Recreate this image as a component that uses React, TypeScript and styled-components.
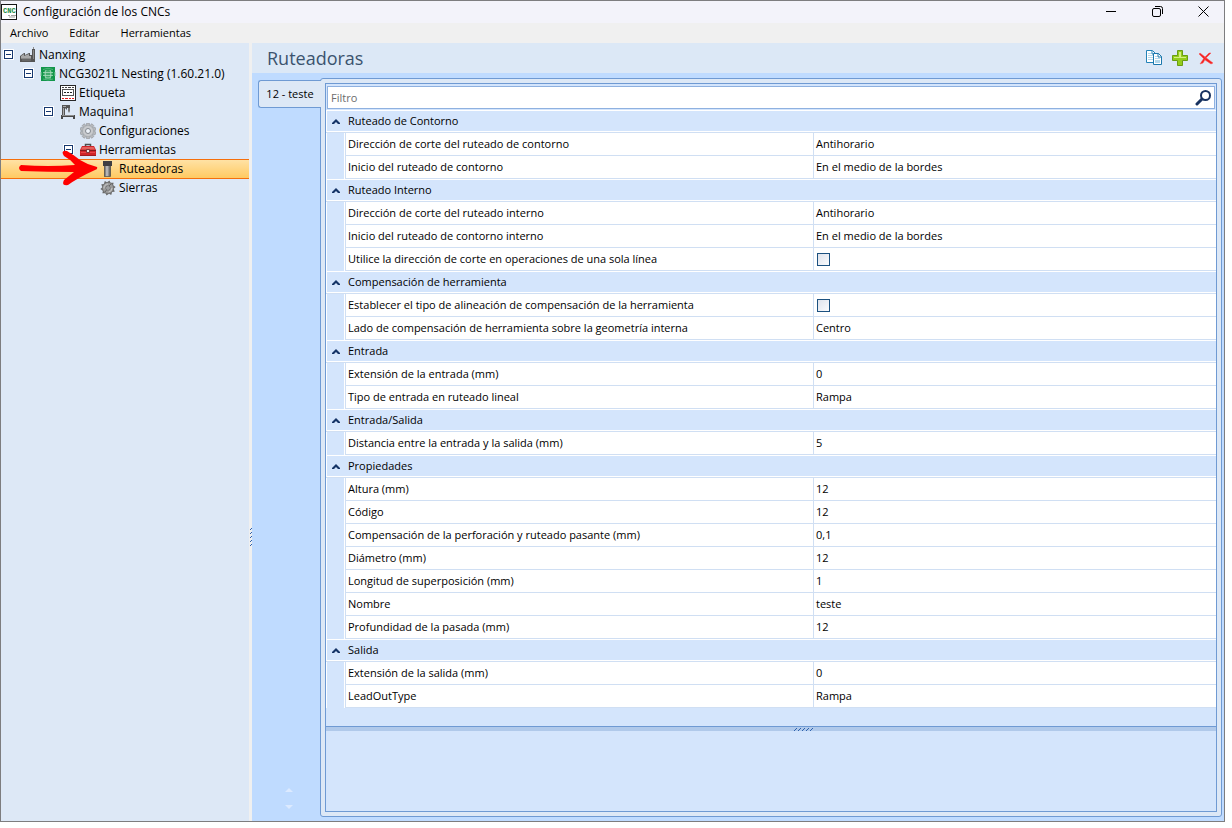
import React, { useState } from "react";
import styled, { createGlobalStyle, css } from "styled-components";

const GlobalStyle = createGlobalStyle`
  * { box-sizing: border-box; }
  body {
    margin: 0;
    background: #fff;
    color: #000;
    font-family: "Segoe UI", "Open Sans", "Noto Sans", sans-serif;
    font-size: 11px;
  }
  button { font: inherit; color: inherit; border: 0; background: none; padding: 0; }
  ul { list-style: none; margin: 0; padding: 0; }
  svg { display: block; flex: none; }
`;

const Window = styled.div`
  display: flex;
  flex-direction: column;
  min-height: calc(100vh - 6px);
  margin-right: 7px;
  border: 1px solid #7d7d7f;
  background: #f0f0f0;
`;

const TitleBar = styled.header`
  display: flex;
  align-items: center;
  height: 22px;
  background: #f3f3fa;
`;

const WindowTitle = styled.h1`
  flex: 1;
  margin: 0 0 0 6px;
  font-size: 12px;
  font-weight: 400;
  line-height: 22px;
`;

const WindowButtons = styled.div`
  display: flex;
  gap: 4px;
  align-self: flex-start;
`;

const WindowButton = styled.button`
  display: flex;
  align-items: center;
  justify-content: center;
  width: 42px;
  height: 20px;
`;

const MenuBar = styled.nav`
  display: flex;
  gap: 21px;
  height: 20px;
  padding-left: 9px;
  line-height: 20px;
`;

const Body = styled.div`
  display: flex;
  flex: 1;
`;

const TreePanel = styled.aside`
  width: 248px;
  flex: none;
  padding-top: 2px;
  background: #dde8f6;
`;

const TreeRow = styled.li<{ $depth: number; $selected?: boolean }>`
  position: relative;
  display: flex;
  align-items: center;
  gap: 3px;
  height: 19px;
  padding-left: ${(p) => p.$depth * 20 + 3}px;
  font-size: 12px;
  line-height: 19px;
  white-space: nowrap;
  ${(p) =>
    p.$selected &&
    css`
      background: linear-gradient(#ffe3a8, #ffca62);
      box-shadow: inset 0 1px #f56f0c, 0 1px #f56f0c;
    `}
`;

const ExpanderSlot = styled.span`
  display: flex;
  width: 13px;
  flex: none;
`;

const Expander = styled.button`
  display: flex;
  align-items: center;
  justify-content: center;
  width: 9px;
  height: 9px;
  border: 1px solid #16386f;
  background: #fff;
  outline: 1px solid #fff;

  &::before {
    content: "";
    width: 5px;
    height: 1px;
    background: #16386f;
  }
`;

const Pointer = styled.svg`
  position: absolute;
  left: 17px;
  top: -9px;
  z-index: 1;
  pointer-events: none;
`;

const Splitter = styled.div`
  display: flex;
  align-items: center;
  justify-content: flex-end;
  width: 3px;
  flex: none;
  padding-top: 210px;
`;

const Main = styled.main`
  display: flex;
  flex: 1;
  flex-direction: column;
  min-width: 0;
  background: #bfdbff;
`;

const MainHeader = styled.div`
  display: flex;
  align-items: center;
  height: 30px;
  padding: 0 9px 0 15px;
  background: #dce8f6;
`;

const Heading = styled.h2`
  flex: 1;
  margin: 0;
  color: #3b536e;
  font-size: 18px;
  font-weight: 400;
  line-height: 30px;
`;

const Toolbar = styled.div`
  display: flex;
  gap: 9px;
`;

const Workspace = styled.div`
  display: flex;
  flex: 1;
  padding: 5px 2px 4px 6px;
`;

const TabStrip = styled.div`
  display: flex;
  flex-direction: column;
  width: 63px;
  flex: none;
  margin-right: -1px;
  padding-top: 2px;
  z-index: 1;
`;

const Tab = styled.button`
  height: 28px;
  border: 1px solid #6f9ad3;
  border-right: 0;
  border-radius: 3px 0 0 3px;
  background: #dde8f6;
  line-height: 26px;
  white-space: nowrap;
`;

const TabScroll = styled.div`
  display: flex;
  flex-direction: column;
  gap: 13px;
  align-items: center;
  margin-top: auto;
  padding: 0 2px 8px 0;
`;

const TabPage = styled.section`
  display: flex;
  flex: 1;
  min-width: 0;
  padding: 4px;
  border: 1px solid #6f9ad3;
  border-radius: 3px;
  background: #dde8f6;
`;

const PropertyPanel = styled.div`
  display: flex;
  flex: 1;
  flex-direction: column;
  min-width: 0;
  border: 1px solid #6f9ad3;
  background: #d4e5fc;
`;

const Filter = styled.div`
  display: flex;
  align-items: center;
  height: 23px;
  margin: 2px 1px 1px;
  border: 1px solid #8fb1e0;
  background: #fff;
`;

const FilterInput = styled.input`
  flex: 1;
  min-width: 0;
  height: 20px;
  padding: 0 3px;
  border: 0;
  outline: 0;
  background: none;
  font: inherit;

  &::placeholder { color: #6d6d6d; opacity: 1; }
`;

const SearchButton = styled.button`
  padding-right: 2px;
`;

const Grid = styled.table`
  width: 100%;
  border-collapse: separate;
  border-spacing: 0;
  table-layout: fixed;
  margin-bottom: 18px;
`;

const GutterCol = styled.col`
  width: 19px;
`;

const NameCol = styled.col`
  width: 468px;
`;

const GroupRow = styled.tr`
  height: 23px;
`;

const GroupCell = styled.th`
  padding: 0;
  border-bottom: 1px solid #d0dff3;
  background: #d4e5fc;
  box-shadow: inset 0 1px #fff, inset 0 -1px #fff, inset 1px 0 #fff;
  font-weight: 400;
  text-align: left;
`;

const GroupToggle = styled.button`
  display: flex;
  align-items: center;
  gap: 8px;
  height: 22px;
  padding-left: 6px;
  line-height: 22px;
`;

const Row = styled.tr`
  height: 23px;
  background: #fff;
`;

const Gutter = styled.td`
  padding: 0;
  background: #d4e5fc;
  box-shadow: inset 1px 0 #fff, inset -1px 0 #fff;
`;

const Cell = styled.td`
  padding: 0 0 0 2px;
  border-left: 1px solid #d0dff3;
  border-bottom: 1px solid #d0dff3;
  line-height: 22px;
  white-space: nowrap;
`;

const Check = styled.input`
  appearance: none;
  display: block;
  width: 13px;
  height: 13px;
  margin: 0 0 0 1px;
  border: 1px solid #1c5180;
  background: linear-gradient(135deg, #dfe3ec, #fafbfd);
`;

const DescriptionSplitter = styled.div`
  display: flex;
  align-items: center;
  justify-content: center;
  height: 5px;
  padding-left: 64px;
  border-top: 1px solid #6f9ad3;
  background: #b0c9ea;
`;

const Description = styled.div`
  flex: 1;
  min-height: 40px;
`;

type IconName = "factory" | "machine" | "label" | "mill" | "gear" | "toolbox" | "bit" | "saw";

const icons: Record<IconName, React.ReactNode> = {
  factory: (
    <>
      <path d="M0 15V9l4-3h1v2l4-2h1v2h2V2h3v13z" fill="#555" />
      <path d="M1 9l3-2v2l5-2v2h2v2H1z" fill="#a8a8a8" />
      <path d="M1 11.500h10" stroke="#8a8a8a" />
      <path d="M13.500 3v9" stroke="#8c8c8c" />
      <path d="M2 13h9" stroke="#787878" />
      <path d="M13.500 0v2" stroke="#8d8d8d" />
    </>
  ),
  machine: (
    <>
      <rect x="1" y="1" width="14" height="14" fill="#12964a" />
      <path d="M1 6v4M15 6v4" stroke="#7cc79b" />
      <circle cx="8" cy="8" r="4.500" fill="#43ab6d" />
      <path d="M3 6.500h10M3 9.500h10M6 4c-1 2-1 6 0 8M10 4c1 2 1 6 0 8M5 12h6" fill="none" stroke="#a9dcbe" strokeWidth=".8" />
      <path d="M3 3.500q5-2.500 10 0M3 13q5 2 10 0" fill="none" stroke="#7cc79b" strokeWidth=".6" />
    </>
  ),
  label: (
    <>
      <rect x="0.500" y="0.500" width="15" height="15" fill="#fff" stroke="#272727" />
      <path d="M2 2.500h2M5 2.500h2M8 2.500h3M12 2.500h2" stroke="#444" />
      <rect x="2.500" y="4.500" width="11" height="6" fill="none" stroke="#555" />
      <path d="M4 7.500h2M7 7.500h2M10 7.500h2" stroke="#222" />
      <path d="M2 13.500h2M5 13.500h3M9 13.500h2M12 13.500h2" stroke="#e21b1b" />
    </>
  ),
  mill: (
    <>
      <path d="M2 1h8v3H7v2l-2-2v7H2z" fill="#555" />
      <path d="M3 2h3v1H3zM3 4h1v7H3z" fill="#aaa" />
      <path d="M8 4h2v3L9 9 8 7z" fill="#777" />
      <path d="M1 15v-4h14v4h-2v-2H3v2z" fill="#484848" />
      <path d="M2 11.500h12" stroke="#8d8d8d" />
    </>
  ),
  gear: (
    <>
      {Array.from({ length: 10 }, (_, i) => (
        <rect key={i} x="6.500" y="0" width="3" height="4" rx=".6" fill="#b7b9bc" stroke="#92969b" strokeWidth=".6" transform={`rotate(${i * 36} 8 8)`} />
      ))}
      <circle cx="8" cy="8" r="5.500" fill="#c8cacd" stroke="#a0a4a8" strokeWidth=".6" />
      <circle cx="8" cy="8" r="2.500" fill="#eef3f9" stroke="#83888e" />
    </>
  ),
  toolbox: (
    <>
      <path d="M5.500 5V2.500h5V5" fill="none" stroke="#4d4d4d" strokeWidth="1.500" />
      <path d="M2 4h12l2 4v6H0V8z" fill="#cf2428" />
      <path d="M2.500 5h11L15 7.500H1z" fill="#e4605d" />
      <path d="M0 8.500h16" stroke="#84191c" />
      <path d="M1 10.500h14" stroke="#e8474a" />
      <path d="M0 13.500h16" stroke="#a01a1e" />
      <path d="M6.500 7.500h3v3h-3z" fill="#e9e9e9" stroke="#6b2426" strokeWidth=".8" />
    </>
  ),
  bit: (
    <>
      <defs>
        <linearGradient id="shank">
          <stop offset="0" stopColor="#555" />
          <stop offset=".4" stopColor="#c8c8c8" />
          <stop offset="1" stopColor="#4c4c4c" />
        </linearGradient>
      </defs>
      <rect x="4.500" y="4" width="6" height="11.500" fill="url(#shank)" stroke="#4a4a4a" strokeWidth=".7" />
      <rect x="3" y="0" width="9" height="5" fill="#3f3f43" />
    </>
  ),
  saw: (
    <>
      {Array.from({ length: 10 }, (_, i) => (
        <path key={i} d="M6 3L9.500 0.500L11 4z" fill="#686868" transform={`rotate(${i * 36} 8 8)`} />
      ))}
      <circle cx="8" cy="8" r="5.500" fill="#9a9a9a" stroke="#707070" strokeWidth=".6" />
      <path d="M4 8.500a4 4 0 0 1 4-4.500M12 8a4 4 0 0 1-3.500 4" fill="none" stroke="#c9c9c9" />
      <path d="M11 4l-2 2M5 12l1.500-2" stroke="#666" />
      <circle cx="8" cy="8" r="2" fill="#f2f4f6" stroke="#555" strokeWidth=".8" />
      <circle cx="8" cy="8" r=".8" fill="#333" />
    </>
  ),
};

const TreeIcon = ({ name }: { name: IconName }) => (
  <svg width="16" height="16" viewBox="0 0 16 16" aria-hidden="true">
    {icons[name]}
  </svg>
);

const tree: { label: string; icon: IconName; depth: number; parent?: boolean }[] = [
  { label: "Nanxing", icon: "factory", depth: 0, parent: true },
  { label: "NCG3021L Nesting (1.60.21.0)", icon: "machine", depth: 1, parent: true },
  { label: "Etiqueta", icon: "label", depth: 2 },
  { label: "Maquina1", icon: "mill", depth: 2, parent: true },
  { label: "Configuraciones", icon: "gear", depth: 3 },
  { label: "Herramientas", icon: "toolbox", depth: 3, parent: true },
  { label: "Ruteadoras", icon: "bit", depth: 4 },
  { label: "Sierras", icon: "saw", depth: 4 },
];

const groups: { title: string; rows: [string, string | boolean][] }[] = [
  {
    title: "Ruteado de Contorno",
    rows: [
      ["Dirección de corte del ruteado de contorno", "Antihorario"],
      ["Inicio del ruteado de contorno", "En el medio de la bordes"],
    ],
  },
  {
    title: "Ruteado Interno",
    rows: [
      ["Dirección de corte del ruteado interno", "Antihorario"],
      ["Inicio del ruteado de contorno interno", "En el medio de la bordes"],
      ["Utilice la dirección de corte en operaciones de una sola línea", false],
    ],
  },
  {
    title: "Compensación de herramienta",
    rows: [
      ["Establecer el tipo de alineación de compensación de la herramienta", false],
      ["Lado de compensación de herramienta sobre la geometría interna", "Centro"],
    ],
  },
  {
    title: "Entrada",
    rows: [
      ["Extensión de la entrada (mm)", "0"],
      ["Tipo de entrada en ruteado lineal", "Rampa"],
    ],
  },
  { title: "Entrada/Salida", rows: [["Distancia entre la entrada y la salida (mm)", "5"]] },
  {
    title: "Propiedades",
    rows: [
      ["Altura (mm)", "12"],
      ["Código", "12"],
      ["Compensación de la perforación y ruteado pasante (mm)", "0,1"],
      ["Diámetro (mm)", "12"],
      ["Longitud de superposición (mm)", "1"],
      ["Nombre", "teste"],
      ["Profundidad de la pasada (mm)", "12"],
    ],
  },
  {
    title: "Salida",
    rows: [
      ["Extensión de la salida (mm)", "0"],
      ["LeadOutType", "Rampa"],
    ],
  },
];

const LogoText = styled.text`
  font-family: "Liberation Mono", monospace;
  font-size: 7px;
  font-weight: 700;
  fill: #16883c;
`;

const AppIcon = () => (
  <svg width="16" height="16" viewBox="0 0 16 16" aria-hidden="true">
    <rect x="0.500" y="0.500" width="15" height="15" fill="#fff" stroke="#151515" />
    <LogoText x="2" y="9">CNC</LogoText>
    <path d="M7 11.500h2M10 11.500h5M8 13h6" stroke="#a0a0a0" />
  </svg>
);

const PropertyGroup = ({ title, rows }: { title: string; rows: [string, string | boolean][] }) => {
  const [open, setOpen] = useState(true);
  return (
    <tbody>
      <GroupRow>
        <GroupCell colSpan={3} scope="rowgroup">
          <GroupToggle type="button" aria-expanded={open} onClick={() => setOpen(!open)}>
            <svg width="8" height="5" viewBox="0 0 8 5" aria-hidden="true">
              <path d="M0 5V4l4-4 4 4v1H6L4 3 2 5z" fill="#153467" />
            </svg>
            {title}
          </GroupToggle>
        </GroupCell>
      </GroupRow>
      {open &&
        rows.map(([name, value]) => (
          <Row key={name}>
            <Gutter />
            <Cell>{typeof value === "boolean" ? <label htmlFor={name}>{name}</label> : name}</Cell>
            <Cell>{typeof value === "boolean" ? <Check type="checkbox" id={name} defaultChecked={value} /> : value}</Cell>
          </Row>
        ))}
    </tbody>
  );
};

export default function App() {
  return (
    <>
      <GlobalStyle />
      <Window>
        <TitleBar>
          <AppIcon />
          <WindowTitle>Configuración de los CNCs</WindowTitle>
          <WindowButtons>
            <WindowButton type="button" aria-label="Minimizar">
              <svg width="10" height="11" viewBox="0 0 10 11"><path d="M0 5.500h10" stroke="#000" /></svg>
            </WindowButton>
            <WindowButton type="button" aria-label="Restaurar">
              <svg width="11" height="11" viewBox="0 0 11 11" fill="none" stroke="#000">
                <rect x="0.500" y="2.500" width="8" height="8" rx="1.500" />
                <path d="M3 .5h5.500a2 2 0 0 1 2 2V8" />
              </svg>
            </WindowButton>
            <WindowButton type="button" aria-label="Cerrar">
              <svg width="11" height="11" viewBox="0 0 11 11"><path d="M.5.5l10 10M10.500.5l-10 10" stroke="#000" /></svg>
            </WindowButton>
          </WindowButtons>
        </TitleBar>
        <MenuBar>
          <button type="button">Archivo</button>
          <button type="button">Editar</button>
          <button type="button">Herramientas</button>
        </MenuBar>
        <Body>
          <TreePanel>
            <ul role="tree" aria-label="Máquinas">
              {tree.map((item) => {
                const selected = item.label === "Ruteadoras";
                return (
                  <TreeRow key={item.label} role="treeitem" aria-level={item.depth + 1} aria-selected={selected} $depth={item.depth} $selected={selected}>
                    <ExpanderSlot>{item.parent && <Expander type="button" aria-label={`Contraer ${item.label}`} />}</ExpanderSlot>
                    <TreeIcon name={item.icon} />
                    <span>{item.label}</span>
                    {selected && (
                      <Pointer width="80" height="38" viewBox="0 0 80 38" aria-hidden="true">
                        <path
                          d="M3 15Q30 17 57 15Q52 9 46 6Q42 0 49 1Q56 5 62 10Q70 15 79 17Q80 19 77 20Q68 24 61 28Q54 32 50 35Q43 36 46 30Q51 26 56 22Q30 22 3 21Q-1 18 3 15Z"
                          fill="#fe0000"
                        />
                      </Pointer>
                    )}
                  </TreeRow>
                );
              })}
            </ul>
          </TreePanel>
          <Splitter>
            <svg width="2" height="18" viewBox="0 0 2 18" aria-hidden="true">
              <path d="M0 2l2-2M0 6l2-2M0 10l2-2M0 14l2-2M0 18l2-2" stroke="#2f62ae" />
            </svg>
          </Splitter>
          <Main>
            <MainHeader>
              <Heading>Ruteadoras</Heading>
              <Toolbar>
                <button type="button" aria-label="Copiar">
                  <svg width="18" height="16" viewBox="0 0 18 16">
                    <path d="M1.500.5h6l3 3v9h-9z" fill="#fff" stroke="#2383b8" />
                    <path d="M7 1v3h3" fill="none" stroke="#2383b8" />
                    <path d="M3 3.500h3M3 5.500h5M3 7.500h5M3 9.500h5" stroke="#b6d9eb" />
                    <path d="M8.500 3.500h5l3 3v8h-8z" fill="#fff" stroke="#1b78ad" />
                    <path d="M13 3v4h4" fill="none" stroke="#1b78ad" />
                    <path d="M10 6.500h2M10 8.500h5" stroke="#b6d9eb" />
                    <path d="M10 10h5v3h-5z" fill="#b3d7ea" />
                  </svg>
                </button>
                <button type="button" aria-label="Agregar">
                  <svg width="16" height="16" viewBox="0 0 16 16">
                    <path d="M5.500.5h5v5h5v5h-5v5h-5v-5h-5v-5h5z" fill="#94cd1b" stroke="#6a9d12" />
                    <path d="M7 2h2v5h5v1H7zM2 7h5v1H2z" fill="#d4ef82" />
                  </svg>
                </button>
                <button type="button" aria-label="Eliminar">
                  <svg width="18" height="16" viewBox="0 0 18 16">
                    <path d="M3 3Q8 7 16 13L14 14Q7 10 2 4ZM14 3L9 8 6 13 3 14 7 8 12 3Z" fill="#f42020" stroke="#fa5555" strokeWidth=".5" />
                  </svg>
                </button>
              </Toolbar>
            </MainHeader>
            <Workspace>
              <TabStrip>
                <Tab type="button" role="tab" aria-selected="true">12 - teste</Tab>
                <TabScroll>
                  <button type="button" aria-label="Anterior">
                    <svg width="8" height="4" viewBox="0 0 8 4"><path d="M0 4l4-4 4 4z" fill="#dceaff" /></svg>
                  </button>
                  <button type="button" aria-label="Siguiente">
                    <svg width="8" height="4" viewBox="0 0 8 4"><path d="M0 0h8L4 4z" fill="#dceaff" /></svg>
                  </button>
                </TabScroll>
              </TabStrip>
              <TabPage>
                <PropertyPanel>
                  <Filter>
                    <FilterInput type="text" placeholder="Filtro" aria-label="Filtro" />
                    <SearchButton type="button" aria-label="Buscar">
                      <svg width="17" height="17" viewBox="0 0 17 17" fill="none" stroke="#183260">
                        <circle cx="10.500" cy="6.500" r="4.500" strokeWidth="2" />
                        <path d="M7 10l-5 5" strokeWidth="3" strokeLinecap="round" />
                      </svg>
                    </SearchButton>
                  </Filter>
                  <Grid>
                    <colgroup>
                      <GutterCol />
                      <NameCol />
                      <col />
                    </colgroup>
                    {groups.map((g) => (
                      <PropertyGroup key={g.title} {...g} />
                    ))}
                  </Grid>
                  <DescriptionSplitter>
                    <svg width="19" height="3" viewBox="0 0 19 3" aria-hidden="true">
                      <path d="M0 3l3-3M4 3l3-3M8 3l3-3M12 3l3-3M16 3l3-3" stroke="#2f62ae" />
                    </svg>
                  </DescriptionSplitter>
                  <Description />
                </PropertyPanel>
              </TabPage>
            </Workspace>
          </Main>
        </Body>
      </Window>
    </>
  );
}
